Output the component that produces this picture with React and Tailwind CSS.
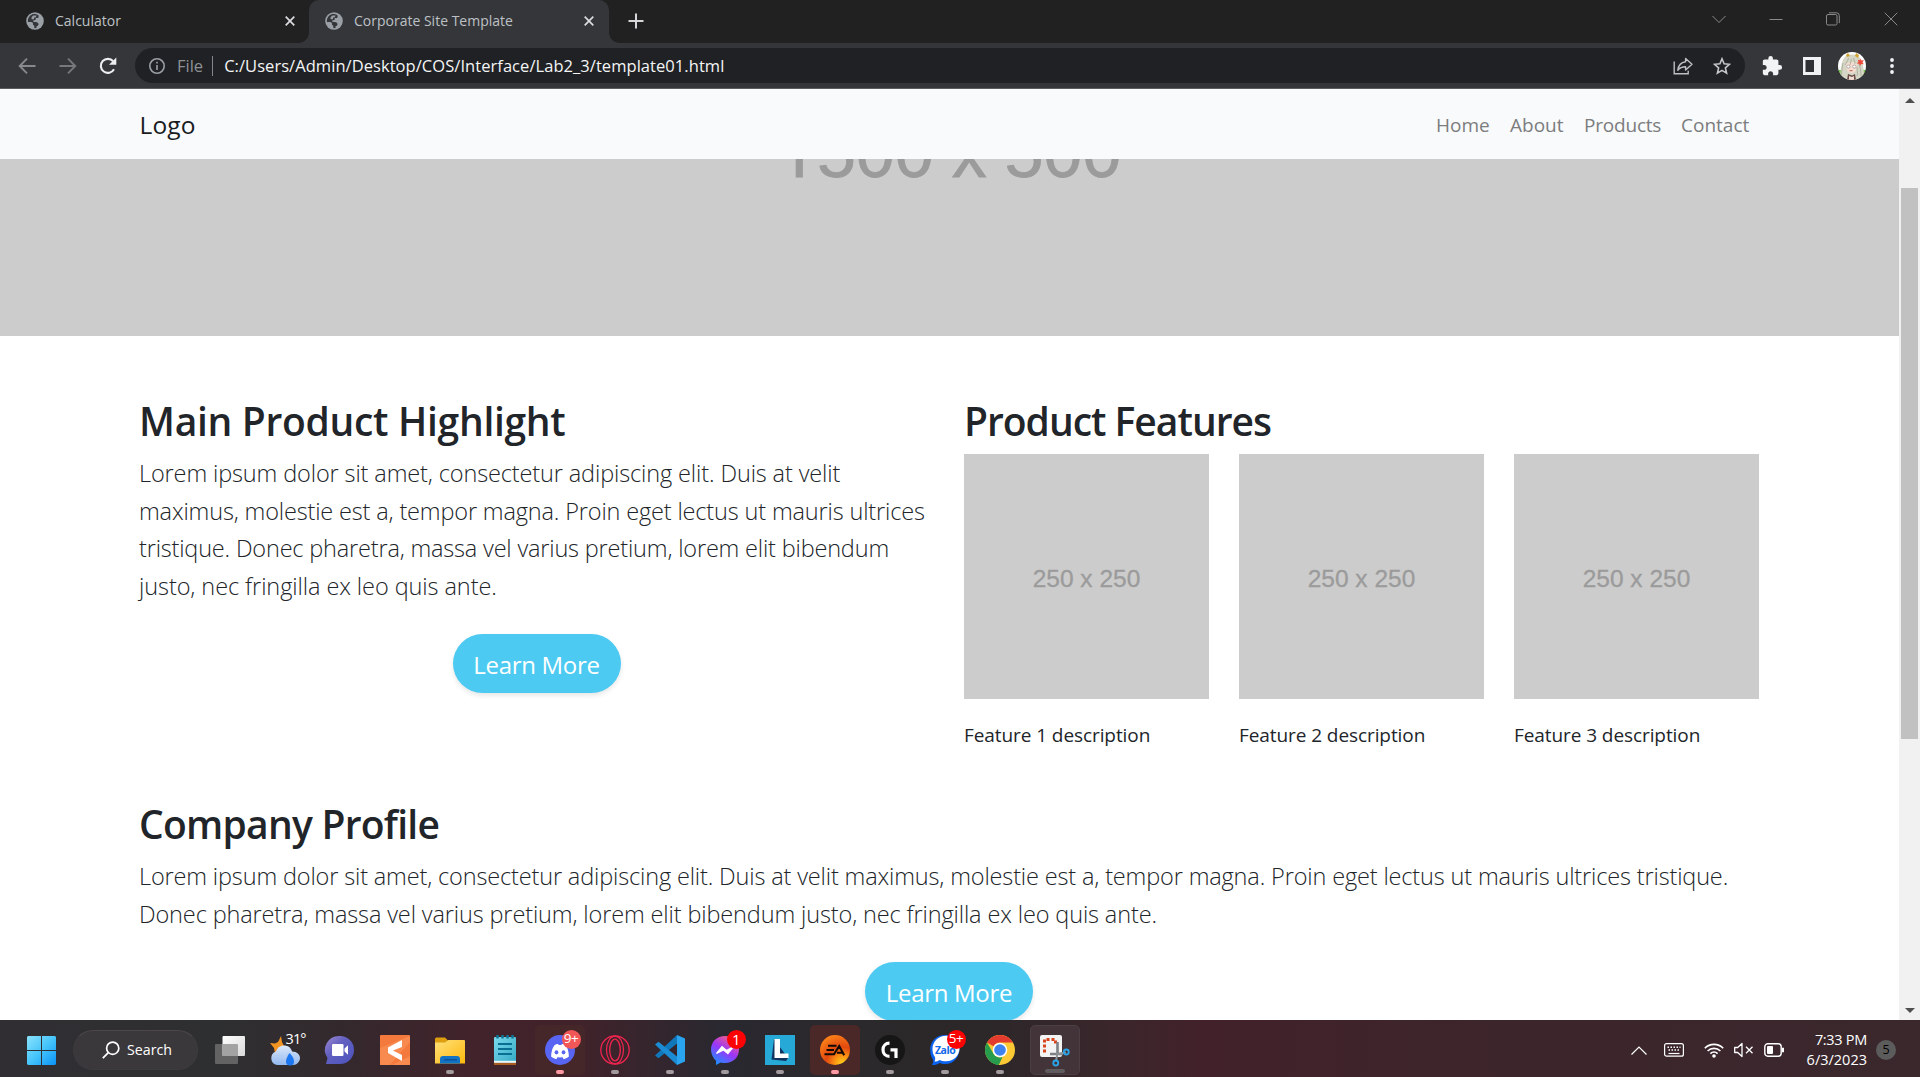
import React from "react";

const LOREM_LEFT = [
  ["Lorem ipsum dolor sit amet, consectetur adipiscing elit. Duis at velit", "tracking-[-0.125px]"],
  ["maximus, molestie est a, tempor magna. Proin eget lectus ut mauris ultrices", "tracking-[-0.155px]"],
  ["tristique. Donec pharetra, massa vel varius pretium, lorem elit bibendum", "tracking-[-0.18px]"],
  ["justo, nec fringilla ex leo quis ante.", "tracking-[-0.08px]"],
];

const LOREM_WIDE = [
  ["Lorem ipsum dolor sit amet, consectetur adipiscing elit. Duis at velit maximus, molestie est a, tempor magna. Proin eget lectus ut mauris ultrices tristique.", "tracking-[-0.148px]"],
  ["Donec pharetra, massa vel varius pretium, lorem elit bibendum justo, nec fringilla ex leo quis ante.", "tracking-[-0.13px]"],
];

/* ---------- browser chrome ---------- */

function Globe() {
  return (
    <svg viewBox="0 0 18 18" className="h-[18px] w-[18px] shrink-0">
      <circle cx="9" cy="9" r="8.8" fill="#9aa0a6" />
      <path d="M7.6 2.1C4.2 2.8 1.9 5.7 1.9 9c0 .4 0 .7.1 1l3.1 0c1.1 0 1.9.8 1.9 1.8v1.1c.8 0 1.3.6 1.3 1.3v1.9c.8.1 1.5 0 2.2-.1v-1.8c1.3 0 2-.8 2-1.9 0-.8-.5-1.5-1.2-1.8l-1.2-.4H7.4V8.200h1.400c.5 0 .9-.4.9-.9V6h1.400c.9 0 1.500-.7 1.500-1.600v-.9c-1.400-1.200-3.200-1.700-5-1.400z" fill="#35363a" />
      <path d="M7.300 3.500h3.300l-1 1.900H8v1.900H5.600V5.200z" fill="#9aa0a6" />
    </svg>
  );
}

function TabClose() {
  return (
    <svg viewBox="0 0 10 10" className="h-[10px] w-[10px] shrink-0">
      <path d="M.7.7l8.600 8.600M9.300.7L.7 9.300" stroke="#dadce0" strokeWidth="1.700" />
    </svg>
  );
}

function TabStrip() {
  return (
    <div className="flex h-[43px] bg-[#212121] text-[14px] text-[#bdc1c6]">
      <div className="flex w-[309px] items-center pb-px pl-[26px] pr-[14px]">
        <Globe />
        <span className="ml-[11px] flex-1 pb-0.5">Calculator</span>
        <TabClose />
      </div>
      <div className="relative flex w-[300px] items-center rounded-t-[10px] bg-[#35363a] pb-px pl-4 pr-[15px]">
        <Globe />
        <span className="ml-[11px] flex-1 whitespace-nowrap pb-0.5">Corporate Site Template</span>
        <TabClose />
        <div className="absolute bottom-0 -left-[10px] h-[10px] w-[10px] bg-[radial-gradient(circle_at_0_0,transparent_9.5px,#35363a_10px)]" />
        <div className="absolute -right-[10px] bottom-0 h-[10px] w-[10px] bg-[radial-gradient(circle_at_100%_0,transparent_9.5px,#35363a_10px)]" />
      </div>
      <div className="flex w-[54px] items-center justify-center pb-px">
        <svg viewBox="0 0 16 16" className="h-4 w-4">
          <path d="M8 .5v15M.5 8h15" stroke="#d5d7db" strokeWidth="2" />
        </svg>
      </div>
      <div className="ml-auto flex h-[37px] items-center text-[#8a8a8a]">
        <svg viewBox="0 0 14 14" className="mr-[43px] h-[14px] w-[14px]" fill="none" stroke="currentColor">
          <path d="M.5 4L7 10.500 13.500 4" />
        </svg>
        <svg viewBox="0 0 14 14" className="mr-[43px] h-[14px] w-[14px]" fill="none" stroke="currentColor">
          <path d="M.5 7.500h13" />
        </svg>
        <svg viewBox="0 0 14 14" className="mr-[44px] h-[14px] w-[14px]" fill="none" stroke="currentColor">
          <rect x=".5" y="2.500" width="10.500" height="10.500" rx="1.500" />
          <path d="M3 .8h7.500a2.800 2.800 0 012.800 2.800v7.500" />
        </svg>
        <svg viewBox="0 0 14 14" className="mr-[22px] h-[14px] w-[14px]" fill="none" stroke="currentColor">
          <path d="M.7.7l12.600 12.600M13.300.7L.7 13.300" />
        </svg>
      </div>
    </div>
  );
}

function Toolbar() {
  return (
    <div className="flex h-[46px] items-center border-b border-[#5b5c60] bg-[#35363a]">
      <svg viewBox="0 0 18 18" className="ml-[18px] h-[18px] w-[18px]" fill="none" stroke="#87898c" strokeWidth="1.900">
        <path d="M17.500 9H2M9 1.700L1.700 9 9 16.300" />
      </svg>
      <svg viewBox="0 0 18 18" className="ml-[23px] h-[18px] w-[18px]" fill="none" stroke="#77787c" strokeWidth="1.900">
        <path d="M.5 9H16M9 1.700L16.300 9 9 16.300" />
      </svg>
      <svg viewBox="0 0 18 18" className="ml-[22px] h-[18px] w-[18px]">
        <path d="M15 12.200A7 7 0 1 1 14.200 4.300" fill="none" stroke="#eceef0" strokeWidth="2.100" />
        <path d="M17.300.5v7.300H10z" fill="#eceef0" />
      </svg>
      <div className="ml-[18px] flex h-[35px] w-[1610px] items-center rounded-full bg-[#202124] pl-[14px] pr-[14px]">
        <svg viewBox="0 0 16 16" className="h-4 w-4" fill="none" stroke="#9aa0a6" strokeWidth="1.600">
          <circle cx="8" cy="8" r="7.200" />
          <path d="M8 7v5M8 3.800v1.700" />
        </svg>
        <span className="ml-3 pt-px text-[16.500px] text-[#8d9196]">File</span>
        <div className="ml-[9px] mr-[11px] h-5 w-px bg-[#80868b]" />
        <span className="flex-1 whitespace-nowrap pt-px text-[16.500px] tracking-[0.055px] text-[#f4f5f6]">
          C:/Users/Admin/Desktop/COS/Interface/Lab2_3/template01.html
        </span>
        <svg viewBox="0 0 20 18" className="h-[18px] w-5" fill="none" stroke="#bcc0c4" strokeWidth="1.400">
          <path d="M1.200 4.500v12.300h14v-3" />
          <path d="M12.600 1.500L19 7.300l-6.400 5.800V9.800c-3.600 0-6 1.200-7.800 3.500.5-4.400 3-8 7.800-8.600z" strokeLinejoin="round" />
        </svg>
        <svg viewBox="0 0 18 18" className="ml-5 h-[18px] w-[18px]" fill="none" stroke="#c3c6ca" strokeWidth="1.600">
          <path d="M9 1.800l2.100 5 5.400.5-4.100 3.600 1.200 5.300L9 13.400l-4.600 2.800 1.200-5.300L1.500 7.300l5.400-.5z" />
        </svg>
      </div>
      <svg viewBox="0 0 24 24" className="ml-[16px] h-[22px] w-[22px]" fill="#f1f3f4">
        <path d="M20.500 11H19V7c0-1.100-.9-2-2-2h-4V3.500a2.500 2.500 0 0 0-5 0V5H4c-1.100 0-2 .9-2 2v3.800h1.500c1.500 0 2.700 1.200 2.700 2.700S5 16.200 3.500 16.200H2V20c0 1.100.9 2 2 2h3.800v-1.500c0-1.500 1.200-2.700 2.700-2.700s2.700 1.200 2.700 2.700V22H17c1.100 0 2-.9 2-2v-4h1.500a2.500 2.500 0 0 0 0-5z" />
      </svg>
      <svg viewBox="0 0 18 18" className="ml-[20px] h-[18px] w-[18px]">
        <rect width="18" height="18" fill="#eff1f2" />
        <rect x="2.500" y="3" width="8.500" height="12" fill="#2f3034" />
      </svg>
      <Avatar />
      <svg viewBox="0 0 4 16" className="ml-[24px] h-4 w-1" fill="#f1f3f4">
        <circle cx="2" cy="2" r="1.900" />
        <circle cx="2" cy="8" r="1.900" />
        <circle cx="2" cy="14" r="1.900" />
      </svg>
    </div>
  );
}

function Avatar() {
  return (
    <svg viewBox="0 0 28 28" className="ml-[17px] h-7 w-7">
      <clipPath id="avatarClip">
        <circle cx="14" cy="14" r="14" />
      </clipPath>
      <g clipPath="url(#avatarClip)">
        <rect width="28" height="28" fill="#fff" />
        <path d="M0 18h4v10H0zM24 18h4v10h-4z" fill="#62c032" />
        <path d="M8 4c-4 3-5 10-6 20l5 4h14l5-4c0-9-2-17-6-20-3-2-9-2-12 0z" fill="#d5d6c5" />
        <path d="M8 3l2-2 2 3-3 1zM18 1l3 2-1 3-3-2z" fill="#cda433" />
        <path d="M8 12c0-2 11-3 11 1 0 5-2 8-5.500 8S8 18 8 12z" fill="#f5ddd0" />
        <path d="M7 13c2-3 3-5 3.500-7M12 13l1.500-6M17 12c0-2-1-4-1.500-6M5 11c-1 5-1 9-2 13M21 11c1 4 2 9 2 13M19 15c0 4 1 6 0 9" stroke="#a7a797" strokeWidth=".8" fill="none" />
        <ellipse cx="10.300" cy="14.600" rx="1.700" ry="1.500" fill="#fff" stroke="#8b7f80" strokeWidth=".6" />
        <ellipse cx="16.300" cy="14.600" rx="1.700" ry="1.500" fill="#fff" stroke="#8b7f80" strokeWidth=".6" />
        <path d="M11.500 18.700h3" stroke="#b0503f" strokeWidth=".9" />
        <path d="M10 22l4 1.500L17 22l1 6H9z" fill="#6a4c45" />
        <path d="M11 24l3 1 2-1v4h-5z" fill="#f0dcd0" />
        <path d="M22.500 6.500l1 2 2.500-.3-1.500 2 1.300 2-2.500-.3-1.300 2-.8-2.200-2.400-.2 1.700-1.700-.8-2.100 2.300.6z" fill="#ec4b3c" />
      </g>
    </svg>
  );
}

/* ---------- page ---------- */

function LearnMore() {
  return (
    <button className="h-[59px] w-[168px] shrink-0 rounded-full bg-[#4ccaf2] pt-[3px] text-[24px] tracking-[-0.3px] text-white shadow-[0_2.5px_5px_rgba(0,0,0,0.1)]">
      Learn More
    </button>
  );
}

function Lead({ lines }) {
  return (
    <p className="mt-[10px] text-[23.500px] font-light leading-[37.500px] text-[#212529]">
      {lines.map(([text, tracking]) => (
        <span key={text} className={`block whitespace-nowrap ${tracking}`}>
          {text}
        </span>
      ))}
    </p>
  );
}

function Page() {
  return (
    <div className="flex h-[931px] overflow-hidden bg-white">
      <div className="h-full w-[1899px] overflow-hidden">
        <nav className="flex h-[70px] items-center justify-between bg-[#f8fafc] pl-[139.500px] pr-[149px]">
          <span className="pt-[2px] text-[24.500px] tracking-[0.1px] text-[#1a1c1e]">Logo</span>
          <div className="flex gap-5 pt-0.5 text-[19px] text-[#7c7d7e]">
            <a className="w-[54px]">Home</a>
            <a className="w-[54px]">About</a>
            <a className="w-[77px] tracking-[-0.2px]">Products</a>
            <a className="w-[69px]">Contact</a>
          </div>
        </nav>
        <div className="h-[177px] overflow-hidden bg-[#ccc]">
          <div className="-mt-[46px] whitespace-nowrap text-center font-['Liberation_Sans',sans-serif] text-[70px] leading-[80px] text-[#9b9b9b] [-webkit-text-stroke:0.8px_#9b9b9b] [word-spacing:-1.5px]">
            <span className="font-['Roboto',sans-serif]">1</span>500 x 500
          </div>
        </div>
        <main className="ml-[139px] mt-[61px] w-[1620px] text-[#212529]">
          <div className="flex h-[403px] gap-[30px]">
            <section className="w-[795px]">
              <h2 className="text-[39px] font-semibold leading-[48px] tracking-[-0.3px]">Main Product Highlight</h2>
              <Lead lines={LOREM_LEFT} />
              <div className="mt-[29px] flex justify-center">
                <LearnMore />
              </div>
            </section>
            <section className="w-[795px]">
              <h2 className="text-[39px] font-semibold leading-[48px] tracking-[-1px]">Product Features</h2>
              <div className="mt-[9px] grid grid-cols-3 gap-[30px]">
                {[1, 2, 3].map((n) => (
                  <div key={n}>
                    <div className="flex h-[245px] items-center justify-center bg-[#ccc] pt-[5px] font-['Liberation_Sans',sans-serif] text-[24.500px] text-[#9b9b9b] [-webkit-text-stroke:0.3px_#9b9b9b]">
                      250 x 250
                    </div>
                    <p className="mt-[19px] text-[19px] leading-[34px] tracking-[-0.08px]">Feature {n} description</p>
                  </div>
                ))}
              </div>
            </section>
          </div>
          <section>
            <h2 className="text-[39px] font-semibold leading-[48px] tracking-[-0.75px]">Company Profile</h2>
            <Lead lines={LOREM_WIDE} />
            <div className="mt-[29px] flex justify-center">
              <LearnMore />
            </div>
          </section>
        </main>
      </div>
      <div className="flex w-[21px] flex-col items-center justify-between bg-[#f1f1f1] pb-[7px] pt-[9px]">
        <svg viewBox="0 0 10 5" className="h-[5px] w-[10px]" fill="#4f4f4f">
          <path d="M0 5l5-5 5 5z" />
        </svg>
        <div className="mb-[269px] mt-[85px] w-[17px] flex-1 bg-[#c1c1c1]" />
        <svg viewBox="0 0 10 5" className="h-[5px] w-[10px]" fill="#4f4f4f">
          <path d="M0 0l5 5 5-5z" />
        </svg>
      </div>
    </div>
  );
}

/* ---------- taskbar ---------- */

const icon = "h-[30px] w-[30px] overflow-visible";

function TaskView() {
  return (
    <svg viewBox="0 0 30 30" className={icon}>
      <defs>
        <linearGradient id="tv" x1="0" y1="0" x2="1" y2="1">
          <stop offset="0" stopColor="#fff" />
          <stop offset="1" stopColor="#d9d9d9" />
        </linearGradient>
      </defs>
      <rect x="0" y="9" width="23" height="20" rx="1" fill="#636363" />
      <rect x="7.500" y="1" width="22.500" height="20" rx="1" fill="url(#tv)" />
      <path d="M7.500 9H22a1 1 0 011 1v11H7.500z" fill="#a3a3a3" />
    </svg>
  );
}

function Weather() {
  return (
    <div className="relative">
      <svg viewBox="0 0 30 30" className={icon}>
        <defs>
          <linearGradient id="cl" x1="0" y1="0" x2="0" y2="1">
            <stop offset="0" stopColor="#dce9fb" />
            <stop offset="1" stopColor="#93b8ee" />
          </linearGradient>
        </defs>
        <path d="M0 8l5 .5 3-1.500 3-6 1 6 2 4-2 6-7 1-1-5z" fill="#f29422" />
        <path d="M7 30a7 7 0 01-1-13.500C7.500 12 11 10.500 14 10.500c4 0 7 2 8 6 5 0 8 3 8 6.500S27 30 23 30z" fill="url(#cl)" />
        <path d="M3 22c4-3 9-2 11 1 3-4 8-5 14-2" stroke="#b4cdf3" strokeWidth="1.500" fill="none" />
        <path d="M19.500 18c-2 3-3.500 6-3.500 8.500a4 4 0 008 0c0-3-2-6-4.500-8.500z" fill="#1c76f0" />
      </svg>
      <span className="absolute -top-[5px] left-[15.500px] whitespace-nowrap text-[14.500px] leading-[18px] tracking-[-0.9px] text-white">31°</span>
    </div>
  );
}

function Chat() {
  return (
    <svg viewBox="0 0 30 30" className={icon}>
      <defs>
        <linearGradient id="ch" x1="0" y1="0" x2="1" y2="1">
          <stop offset="0" stopColor="#a08ad0" />
          <stop offset=".4" stopColor="#6260c0" />
          <stop offset="1" stopColor="#4b52bd" />
        </linearGradient>
      </defs>
      <path d="M15 1a14 14 0 110 28H1l1.500-6A14 14 0 0115 1z" fill="url(#ch)" />
      <rect x="7" y="9" width="11.500" height="12" rx="1.200" fill="#fff" />
      <path d="M19.500 13.500l3.500-3.300v9.600l-3.500-3.300z" fill="#fff" />
    </svg>
  );
}

function OrangeApp() {
  return (
    <svg viewBox="0 0 30 30" className={icon}>
      <rect width="30" height="30" rx="1" fill="#f4793c" />
      <path d="M0 13L30 1v6L10 30H0zM12 30l18-9v9z" fill="#fa9159" opacity=".7" />
      <path d="M22 5v7l-9 3.500 9 4.500v6L8 18v-5.500z" fill="#fff" />
    </svg>
  );
}

function Folder() {
  return (
    <svg viewBox="0 0 30 30" className={icon}>
      <defs>
        <linearGradient id="fo" x1="0" y1="0" x2="1" y2="1">
          <stop offset="0" stopColor="#ffe07a" />
          <stop offset="1" stopColor="#fdb90c" />
        </linearGradient>
      </defs>
      <path d="M0 4a1.500 1.500 0 011.500-1.500H10L13 5.500h8V12H0z" fill="#dd9f10" />
      <path d="M0 7.500h10L13.500 5H29a1 1 0 011 1v22.500H0z" fill="url(#fo)" />
      <path d="M5 28.500V24a3 3 0 013-3h14a3 3 0 013 3v4.500z" fill="#1273c4" />
      <path d="M9 24.800h13" stroke="#0b4f93" strokeWidth="1.300" />
    </svg>
  );
}

function Notepad() {
  return (
    <svg viewBox="0 0 30 30" className={icon}>
      <defs>
        <linearGradient id="np" x1="0" y1="0" x2="1" y2="1">
          <stop offset="0" stopColor="#7bdbee" />
          <stop offset="1" stopColor="#35a9c5" />
        </linearGradient>
      </defs>
      <path d="M4 27.500h22V30H4z" fill="#a95a1f" />
      <rect x="4" y="2" width="22" height="25.500" rx="1" fill="url(#np)" />
      <path d="M4 25.800h22v2H4z" fill="#f0f5f6" />
      <path d="M8 9h14M8 14h14M8 19h14" stroke="#086f93" strokeWidth="1.800" />
      <path d="M7.500 0v3.500M12.500 0v3.500M17.500 0v3.500M22.500 0v3.500" stroke="#0f7796" strokeWidth="2.500" />
    </svg>
  );
}

function Discord() {
  return (
    <svg viewBox="0 0 30 30" className={icon}>
      <circle cx="15" cy="15" r="15" fill="#5765f2" />
      <g transform="translate(-1.500 0.500) scale(1.1)">
        <path d="M10.500 9c1-.5 1.700-.7 2.500-.8l.5 1h3l.5-1c.9.100 1.700.4 2.600.8 2 3 3 6.500 2.900 10-1.200 1-2.500 1.500-3.900 1.900l-.9-1.500.9-.6c-2.200.8-5 .8-7.200 0l.9.6-.9 1.500C10 20.500 8.700 20 7.500 19c-.1-3.500.9-7 3-10z" fill="#fff" stroke="#fff" strokeWidth="1" />
        <ellipse cx="11.800" cy="15.300" rx="1.700" ry="1.900" fill="#5765f2" />
        <ellipse cx="18.200" cy="15.300" rx="1.700" ry="1.900" fill="#5765f2" />
      </g>
    </svg>
  );
}

function OperaGX() {
  return (
    <svg viewBox="0 0 30 30" className={icon} fill="none" stroke="#f0244f">
      <circle cx="15" cy="15" r="14.200" strokeWidth="1.300" />
      <ellipse cx="15" cy="15" rx="8.500" ry="13.800" strokeWidth="1.200" />
      <ellipse cx="15" cy="15" rx="5.300" ry="10.800" strokeWidth="1.300" />
      <path d="M10 3.500C13 .8 17 .6 20.500 4M10 26.500c3 2.700 7 2.900 10.500-.5" strokeWidth="1" />
    </svg>
  );
}

function VSCode() {
  return (
    <svg viewBox="0 0 30 30" className={icon}>
      <path d="M22 0v8.500L3.500 23.200 0 20.500z" fill="#1177bb" />
      <path d="M22 30v-8.500L3.500 6.800 0 9.500z" fill="#1b8bd3" />
      <path d="M22 0l8 3.500v23L22 30z" fill="#2ba4ef" />
    </svg>
  );
}

function Messenger() {
  return (
    <svg viewBox="0 0 30 30" className={icon}>
      <defs>
        <linearGradient id="ms" x1=".2" y1="1" x2=".8" y2="0">
          <stop offset="0" stopColor="#1695ff" />
          <stop offset=".5" stopColor="#9a35fb" />
          <stop offset="1" stopColor="#ff6475" />
        </linearGradient>
      </defs>
      <path d="M15 1c8 0 14 5.800 14 13.600S23 28 15 28c-1.500 0-3-.2-4.200-.6L6 30v-4.300C3 23.200 1 19.200 1 14.600 1 6.800 7 1 15 1z" fill="url(#ms)" />
      <path d="M6.500 18.500l5.500-6.800 4.500 3.800 7-3.800-5.600 7-4.400-3.700z" fill="#fff" stroke="#fff" strokeWidth="1.200" />
    </svg>
  );
}

function LApp() {
  return (
    <svg viewBox="0 0 30 30" className={icon}>
      <rect width="30" height="30" fill="#26a9d6" />
      <path d="M9 4l-2.500 20.500L21 26l2-3z" fill="#10335f" />
      <path d="M9.500 4h5.500v14.500h8.500V23H9.500z" fill="#fff" />
    </svg>
  );
}

function EA() {
  return (
    <svg viewBox="0 0 30 30" className={icon}>
      <defs>
        <radialGradient id="ea" cx=".75" cy=".95" r="1">
          <stop offset="0" stopColor="#ffd21c" />
          <stop offset=".3" stopColor="#f98a12" />
          <stop offset=".55" stopColor="#e2480f" />
          <stop offset="1" stopColor="#fb8118" />
        </radialGradient>
      </defs>
      <circle cx="15" cy="15" r="15" fill="url(#ea)" />
      <path d="M8 10.800h8.500M6.500 15h7.500M4.500 19.300h9.500l5.200-8.300 5 9.300M17 17.800h5.500" stroke="#140a05" strokeWidth="2.100" fill="none" />
    </svg>
  );
}

function LogitechG() {
  return (
    <svg viewBox="0 0 30 30" className={icon}>
      <circle cx="15" cy="15" r="15" fill="#161616" />
      <path d="M14.500 8.200c-4 0-6.500 2.900-6.500 6.600s2.500 6.600 6.500 6.600" stroke="#fff" strokeWidth="3.200" fill="none" />
      <path d="M15.500 14.800h5.500V23" stroke="#fff" strokeWidth="3.200" fill="none" />
    </svg>
  );
}

function Zalo() {
  return (
    <div className="relative">
      <svg viewBox="0 0 30 30" className={icon}>
        <path d="M15 0c8 0 14.500 6 14.500 13.500S25 29 15 29c-2.500 0-4-.5-5.500-1C7 30 3 30.500 2 29.800c1-1.800 1.500-3.300 1-5C.8 21.500.2 18 .2 14 .2 6 7 0 15 0z" fill="#0a62ef" />
        <path d="M17 .8c7 .5 12.500 6 12.500 12.700S24 26.300 16 26.300c-2.500 0-4.700-.5-6.500-1.400-2 1.300-3.700 1.700-5 1.500.9-1.700.9-3 .4-4.400C3 19.500 2.500 17 2.500 13.500 2.500 6.500 9 .3 17 .8z" fill="#fff" />
      </svg>
      <span className="absolute left-[5px] top-[8px] text-[10.500px] font-bold leading-[14px] tracking-[-0.5px] text-[#1268e8]">Zalo</span>
    </div>
  );
}

function Chrome() {
  return (
    <svg viewBox="0 0 30 30" className={icon}>
      <circle cx="15" cy="15" r="15" fill="#fcc934" />
      <path d="M15 0a15 15 0 0113 7.500H15A7.500 7.500 0 008.500 11.300L2 7.500A15 15 0 0115 0z" fill="#e33b2e" />
      <path d="M2 7.500l6.500 11.200A7.500 7.500 0 0015 22.500l3-.5-4 8A15 15 0 012 7.500z" fill="#279c4c" />
      <path d="M21.500 18.800L15 30h-1l3.500-8z" fill="#fcc934" />
      <circle cx="15" cy="15" r="7.300" fill="#fff" />
      <circle cx="15" cy="15" r="5.800" fill="#3d82ee" />
    </svg>
  );
}

function Snip() {
  return (
    <svg viewBox="0 0 30 30" className={icon}>
      <rect width="22" height="22" rx="2" fill="#f3f3f3" />
      <path d="M4.500 17.500v-13H15.500v5" fill="none" stroke="#d8441b" strokeWidth="3" strokeDasharray="3 2" />
      <path d="M17.500 7v11M10 19h13" stroke="#7d8084" strokeWidth="2.600" />
      <path d="M17.500 18l-1.500 8M17 19l9-1.500" stroke="#8e9296" strokeWidth="2" />
      <circle cx="15.800" cy="28" r="2.500" fill="none" stroke="#2aa4e8" strokeWidth="1.800" />
      <circle cx="26.300" cy="17" r="2.500" fill="none" stroke="#2aa4e8" strokeWidth="1.800" />
    </svg>
  );
}

const APPS = [
  { Icon: TaskView },
  { Icon: Weather },
  { Icon: Chat },
  { Icon: OrangeApp },
  { Icon: Folder, dot: "gray" },
  { Icon: Notepad },
  { Icon: Discord, dot: "pink", badge: "9+", badgeStyle: "bg-[#f25757] text-[13.5px]", tile: "bg-[#45272a]" },
  { Icon: OperaGX, dot: "gray" },
  { Icon: VSCode, dot: "gray" },
  { Icon: Messenger, dot: "gray", badge: "1", badgeStyle: "bg-[#fd0203] text-[15px]" },
  { Icon: LApp, dot: "gray" },
  { Icon: EA, dot: "pink", tile: "bg-[#4a2827]" },
  { Icon: LogitechG, dot: "gray" },
  { Icon: Zalo, dot: "gray", badge: "5+", badgeStyle: "bg-[#fd0203] text-[13.5px]" },
  { Icon: Chrome, dot: "gray" },
  { Icon: Snip, dot: "wide", tile: "bg-[#423439] border border-[#4c3f44]" },
];

const DOTS = {
  gray: "w-2 bg-[#a39a9e]",
  pink: "w-2 bg-[#ff99a4]",
  wide: "w-5 bg-[#5f5b5e]",
};

function Taskbar() {
  return (
    <div className="flex h-[57px] items-center bg-[linear-gradient(90deg,#302e32_0,#2e2f31_220px,#33292d_340px,#42232b_470px,#42222a_570px,#2a2830_720px,#2b292b_860px,#2c2729_990px,#3a262b_1110px,#42212a_1200px,#3c252b_1500px,#3a282d_1920px)] pt-[3px] text-white">
      <svg viewBox="0 0 29 29" className="ml-[27px] h-[29px] w-[29px]">
        <defs>
          <linearGradient id="win" x1="0" y1="0" x2="1" y2="1">
            <stop offset="0" stopColor="#8be2fb" />
            <stop offset=".5" stopColor="#46c5fb" />
            <stop offset="1" stopColor="#0a93f5" />
          </linearGradient>
        </defs>
        <path d="M1 0h13v14H0V1zM15 0h13l1 1v13H15zM0 15h14v14H1l-1-1zM15 15h14v13l-1 1H15z" fill="url(#win)" />
      </svg>
      <div className="ml-[17px] flex h-10 w-[125px] items-center rounded-full border border-t-[#4d474b] border-[#3e3b3f] bg-[#3b383c] pl-[28px]">
        <svg viewBox="0 0 18 18" className="h-[18px] w-[18px]" fill="none" stroke="#fff" strokeWidth="1.700">
          <circle cx="10.700" cy="7.200" r="6.100" />
          <path d="M6.300 11.600L.8 17.200" />
        </svg>
        <span className="ml-[7px] text-[14.200px]">Search</span>
      </div>
      <div className="ml-[7px] flex gap-[5px]">
        {APPS.map(({ Icon, dot, badge, badgeStyle, tile }, i) => (
          <div key={i} className={`relative flex h-[50px] w-[50px] items-center justify-center rounded-[5px] ${tile || ""}`}>
            <Icon />
            {badge && (
              <span className={`absolute right-[4.500px] top-[4.500px] flex h-[19px] w-[19px] items-center justify-center rounded-full leading-none tracking-[-0.4px] ${badgeStyle}`}>
                {badge}
              </span>
            )}
            {dot && <span className={`absolute bottom-px h-1 rounded-full ${DOTS[dot]}`} />}
          </div>
        ))}
      </div>
      <div className="ml-auto flex items-center">
        <svg viewBox="0 0 16 9" className="h-[9px] w-4" fill="none" stroke="#fff" strokeWidth="1.200">
          <path d="M.5 8.500L8 1l7.500 7.500" />
        </svg>
        <svg viewBox="0 0 20 14" className="ml-[17px] h-[14px] w-5" fill="none" stroke="#fff" strokeWidth="1.200">
          <rect x=".6" y=".6" width="18.800" height="12.600" rx="2" />
          <path d="M3.500 4.200h13M4.500 7h11.500" strokeDasharray="1.500 1.500" strokeWidth="1.400" />
          <path d="M4.500 10.500h11" />
        </svg>
        <svg viewBox="0 0 20 16" className="ml-5 h-4 w-5" fill="none" stroke="#fff" strokeWidth="1.600">
          <path d="M.8 6.200a13 13 0 0118.400 0M3.600 9a9 9 0 0112.800 0M6.400 11.600a5 5 0 017.200 0" />
          <circle cx="10" cy="14" r="1.800" fill="#fff" stroke="none" />
        </svg>
        <svg viewBox="0 0 20 16" className="ml-[10px] h-4 w-5" fill="none" stroke="#fff" strokeWidth="1.300">
          <path d="M.7 5.500h3L8 1.500v13l-4.300-4h-3z" strokeLinejoin="round" />
          <path d="M12 4.700l6.500 6.500M18.500 4.700L12 11.200" />
        </svg>
        <svg viewBox="0 0 20 14" className="ml-[10px] h-[14px] w-5" fill="none" stroke="#fff" strokeWidth="1.400">
          <rect x=".8" y=".8" width="16.400" height="12.400" rx="3" />
          <rect x="3" y="3" width="6" height="8" rx="1" fill="#fff" stroke="none" />
          <path d="M19 4.800v4.400" strokeWidth="2" />
        </svg>
        <div className="w-[83px] pb-px text-right text-[14.500px] leading-5">
          <div className="tracking-[-0.3px]">7:33 PM</div>
          <div>6/3/2023</div>
        </div>
        <div className="ml-[9px] mr-[24px] flex h-5 w-5 items-center justify-center rounded-full bg-[#5c5c5c] pt-px text-[12.500px] leading-none text-black">
          5
        </div>
      </div>
    </div>
  );
}

export default function App() {
  return (
    <div className="h-[1077px] w-[1920px] overflow-hidden bg-white font-['Open_Sans',sans-serif]">
      <TabStrip />
      <Toolbar />
      <Page />
      <Taskbar />
    </div>
  );
}
